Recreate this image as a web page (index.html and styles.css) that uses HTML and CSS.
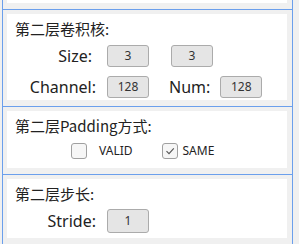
FILE: index.html
```html
<!DOCTYPE html>
<html lang="zh-CN">
<head>
  <meta charset="UTF-8">
  <title>第二层参数</title>
  <link rel="stylesheet" href="styles.css">
</head>
<body>
<div class="list">
    <!-- 上一项（被滚动遮住） -->
    <div class="item first">
        <div class="panel"></div>
    </div>

    <!-- 卷积核 -->
    <div class="item">
        <div class="panel kernel">
            <h4>第二层卷积核:</h4>
            <div class="row">
                <span class="label">Size:</span>
                <span class="box">3</span>
                <span class="box far">3</span>
            </div>
            <div class="row">
                <span class="label wide">Channel:</span>
                <span class="box">128</span>
                <span class="label num">Num:</span>
                <span class="box">128</span>
            </div>
        </div>
    </div>

    <!-- Padding -->
    <div class="item">
        <div class="panel padding">
            <h4>第二层Padding方式:</h4>
            <div class="checks">
                <label class="check valid"><span class="tick"></span>VALID</label>
                <label class="check same"><span class="tick on">
                    <svg width="12" height="12" viewBox="0 0 12 12"><path d="M2.5 6.2 L5 8.7 L9.8 3.4" fill="none" stroke="#555" stroke-width="1.1"/></svg>
                </span>SAME</label>
            </div>
        </div>
    </div>

    <!-- 步长 -->
    <div class="item">
        <div class="panel stride">
            <h4>第二层步长:</h4>
            <div class="row">
                <span class="label wide">Stride:</span>
                <span class="box">1</span>
            </div>
        </div>
    </div>
</div>
</body>
</html>
```

FILE: styles.css
```css
body {
  margin: 0;
  padding: 0;
  background-color: #F0F0F0;
  font-family: "Noto Sans", "Noto Sans CJK SC", sans-serif;
  color: #222;
}

.list {
  width: 289px;
  height: 244px;
  margin-left: 2px;
  border-left: 1px solid #6B9FEC;
  border-right: 1px solid #6B9FEC;
  overflow: hidden;
}

.item {
  padding: 4px 5px 6px 4px;
  border-bottom: 1px solid #6B9FEC;
}

.item.first {
  padding-top: 0;
}

.first .panel {
  height: 3px;
}

.panel {
  background-color: #FFF;
}

.panel h4 {
  margin: 0;
  padding: 5px 0 0 8px;
  font-size: 15px;
  font-weight: normal;
  line-height: 20px;
  font-family: "Noto Sans CJK SC", sans-serif;
}

.kernel {
  height: 86px;
}

.padding {
  height: 57px;
}

.stride {
  height: 59px;
}

.row {
  display: flex;
  align-items: center;
  height: 31px;
}

.kernel .row:first-of-type {
  margin-top: 1px;
}

.label {
  width: 85px;
  text-align: right;
  font-size: 16px;
  margin-right: 15px;
}

.label.wide {
  width: 89px;
  margin-right: 11px;
}

.label.num {
  width: auto;
  margin-left: 20px;
  margin-right: 10px;
}

.box {
  display: block;
  width: 40px;
  height: 20px;
  line-height: 20px;
  border: 1px solid #ABABAB;
  border-radius: 3px;
  background-color: #E5E5E5;
  text-align: center;
  font-size: 12px;
  color: #333;
}

.box.far {
  margin-left: 22px;
}

.stride .row {
  margin-top: 4px;
  height: 26px;
}

.stride .box {
  height: 22px;
  line-height: 22px;
}

.checks {
  display: flex;
  align-items: center;
  margin-top: 6px;
  padding-left: 64px;
  font-size: 12px;
}

.check {
  display: flex;
  align-items: center;
}

.tick {
  display: block;
  width: 14px;
  height: 14px;
  border: 1px solid #A0A0A0;
  border-radius: 3px;
  background-color: #F6F6F6;
  margin-right: 12px;
}

.same {
  margin-left: 29px;
}

.same .tick {
  margin-right: 5px;
}

.tick svg {
  display: block;
  margin: 1px;
}
```
